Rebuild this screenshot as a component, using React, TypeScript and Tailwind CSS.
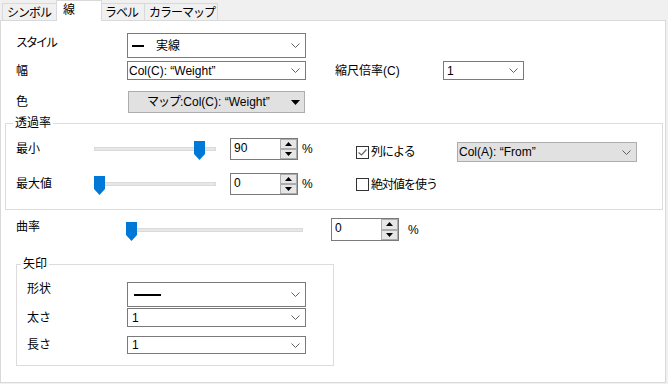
import React from 'react'

type Kids = {className?: string, children?: React.ReactNode}

function Chevron(){
    return(
        <svg width="9" height="5" viewBox="0 0 9 5" className="shrink-0">
            <path d="M0.5 0.5 L4.5 4.5 L8.5 0.5" fill="none" stroke="#606060" strokeWidth="1"/>
        </svg>
    )
}

function Select({className = '', children}: Kids){
    return(
        <div className={`flex items-center justify-between border pr-[5px] ${className}`}>
            <div className="flex items-center whitespace-nowrap">{children}</div>
            <Chevron/>
        </div>
    )
}

function Thumb(){
    return(
        <svg width="11" height="19" viewBox="0 0 11 19">
            <polygon points="0,0 11,0 11,13 5.5,19 0,13" fill="#0078d7"/>
        </svg>
    )
}

function Slider({className = '', width, value}: {className?: string, width: number, value: number}){
    const left = Math.round(value / 100 * (width - 11))
    return(
        <div className={`relative flex h-[22px] items-center ${className}`}>
            <div className="h-[4px] w-full border border-[#dadada] bg-[#e7e7e7]"/>
            <div className="absolute top-[3px]" style={{left}}>
                <Thumb/>
            </div>
        </div>
    )
}

function Arrow({up}: {up: boolean}){
    return(
        <svg width="7" height="4" viewBox="0 0 7 4">
            <polygon points={up ? '3.5,0 7,4 0,4' : '0,0 7,0 3.5,4'} fill="#000"/>
        </svg>
    )
}

function Spin({value, className = ''}: {value: string, className?: string}){
    return(
        <div className={`flex w-[68px] border border-[#7a7a7a] bg-white ${className}`}>
            <div className="flex-1 pl-[3px] leading-[18px]">{value}</div>
            <div className="flex w-[17px] flex-col">
                <div className="flex flex-1 items-center justify-center border border-[#acacac] bg-[#e6e6e6]"><Arrow up/></div>
                <div className="flex flex-1 items-center justify-center border border-[#acacac] bg-[#e6e6e6]"><Arrow up={false}/></div>
            </div>
        </div>
    )
}

function Check({checked}: {checked: boolean}){
    return(
        <div className="flex h-[13px] w-[13px] shrink-0 items-center justify-center border border-[#333] bg-white">
            {checked && (
                <svg width="9" height="7" viewBox="0 0 9 7">
                    <path d="M0.5 3.5 L3.5 6 L8.5 0.5" fill="none" stroke="#666" strokeWidth="1.2"/>
                </svg>
            )}
        </div>
    )
}

export default function App(){
    return(
        <div className="h-[384px] w-[668px] overflow-hidden bg-[#f0f0f0] font-['Liberation_Sans','Noto_Sans_CJK_JP',sans-serif] text-[12px] leading-[14px] text-black">
            <div className="flex h-[21px] items-end whitespace-nowrap tracking-[-1px]">
                <div className="ml-[2px] flex h-[18px] w-[54px] items-center border-l border-t border-[#d9d9d9] pl-[4px]">シンボル</div>
                <div className="relative z-10 flex h-[21px] w-[46px] items-center border-x border-t border-[#d9d9d9] bg-white pb-[2px] pl-[6px]">線</div>
                <div className="flex h-[18px] w-[43px] items-center border-r border-t border-[#d9d9d9] pl-[3px]">ラベル</div>
                <div className="flex h-[18px] w-[73px] items-center border-r border-t border-[#d9d9d9] pl-[4px]">カラーマップ</div>
            </div>

            <div className="-mt-px h-[363px] w-[666px] border border-[#d9d9d9] bg-white pl-[15px] pt-[12px]">
                <div className="flex h-[25px] items-start">
                    <div className="mt-[3px] w-[111px] tracking-[-2px]">スタイル</div>
                    <Select className="h-[25px] w-[179px] border-[#7a7a7a] bg-white pl-[4px]">
                        <div className="h-[2px] w-[12px] bg-black"/>
                        <span className="ml-[12px]">実線</span>
                    </Select>
                </div>

                <div className="mt-[3px] flex h-[19px] items-center">
                    <div className="w-[111px]">幅</div>
                    <Select className="h-[19px] w-[179px] border-[#7a7a7a] bg-white pl-[1px]">Col(C): “Weight”</Select>
                    <div className="ml-[29px] w-[108px]">縮尺倍率(C)</div>
                    <Select className="h-[19px] w-[81px] border-[#7a7a7a] bg-white pl-[3px]">1</Select>
                </div>

                <div className="mt-[11px] flex h-[22px] items-center">
                    <div className="w-[112px]">色</div>
                    <div className="flex h-[22px] w-[177px] items-center justify-between border border-[#adadad] bg-[#e1e1e1] pl-[18px] pr-[4px]">
                        <span className="whitespace-nowrap"><span className="tracking-[-1px]">マップ</span>:Col(C): “Weight”</span>
                        <svg width="9" height="5" viewBox="0 0 9 5"><polygon points="0,0 9,0 4.5,5" fill="#000"/></svg>
                    </div>
                </div>

                <fieldset className="-ml-[11px] mt-[3px] w-[658px] border border-[#dcdcdc] p-0">
                    <legend className="ml-[7px] px-[2px] leading-[14px]">透過率</legend>
                    <div className="flex pb-[14px] pt-[8px]">
                        <div className="w-[350px] pl-[10px]">
                            <div className="flex h-[22px] items-center">
                                <div className="w-[78px]">最小</div>
                                <Slider className="w-[122px]" width={122} value={90}/>
                                <Spin className="ml-[14px] h-[22px]" value="90"/>
                                <span className="ml-[4px]">%</span>
                            </div>
                            <div className="mt-[13px] flex h-[22px] items-center">
                                <div className="w-[78px]">最大値</div>
                                <Slider className="w-[122px]" width={122} value={0}/>
                                <Spin className="ml-[14px] h-[22px]" value="0"/>
                                <span className="ml-[4px]">%</span>
                            </div>
                        </div>
                        <div className="pt-[4px]">
                            <div className="flex h-[20px] items-center">
                                <Check checked/>
                                <span className="ml-[2px] w-[86px] tracking-[-1px]">列による</span>
                                <Select className="h-[20px] w-[180px] border-[#adadad] bg-[#e1e1e1] pl-[1px]">Col(A): “From”</Select>
                            </div>
                            <div className="mt-[16px] flex h-[13px] items-center">
                                <Check checked={false}/>
                                <span className="ml-[2px] tracking-[-1px]">絶対値を使う</span>
                            </div>
                        </div>
                    </div>
                </fieldset>

                <div className="mt-[8px] flex h-[23px] items-center">
                    <div className="w-[110px] pb-[5px]">曲率</div>
                    <Slider className="w-[177px]" width={177} value={0}/>
                    <Spin className="ml-[28px] h-[23px]" value="0"/>
                    <span className="ml-[9px]">%</span>
                </div>

                <fieldset className="mt-[16px] w-[318px] border border-[#dcdcdc] p-0">
                    <legend className="ml-[4px] px-[2px] leading-[14px]">矢印</legend>
                    <div className="pb-[11px] pl-[10px] pt-[11px]">
                        <div className="flex h-[25px] items-start">
                            <div className="w-[100px]">形状</div>
                            <Select className="h-[25px] w-[179px] border-[#7a7a7a] bg-white pl-[6px]">
                                <div className="h-[2px] w-[27px] bg-black"/>
                            </Select>
                        </div>
                        <div className="mt-[1px] flex h-[19px] items-center">
                            <div className="w-[100px]">太さ</div>
                            <Select className="h-[19px] w-[179px] border-[#7a7a7a] bg-white pl-[4px]">1</Select>
                        </div>
                        <div className="mt-[9px] flex h-[18px] items-center">
                            <div className="w-[100px]">長さ</div>
                            <Select className="h-[18px] w-[179px] border-[#7a7a7a] bg-white pl-[4px]">1</Select>
                        </div>
                    </div>
                </fieldset>
            </div>
        </div>
    )
}
